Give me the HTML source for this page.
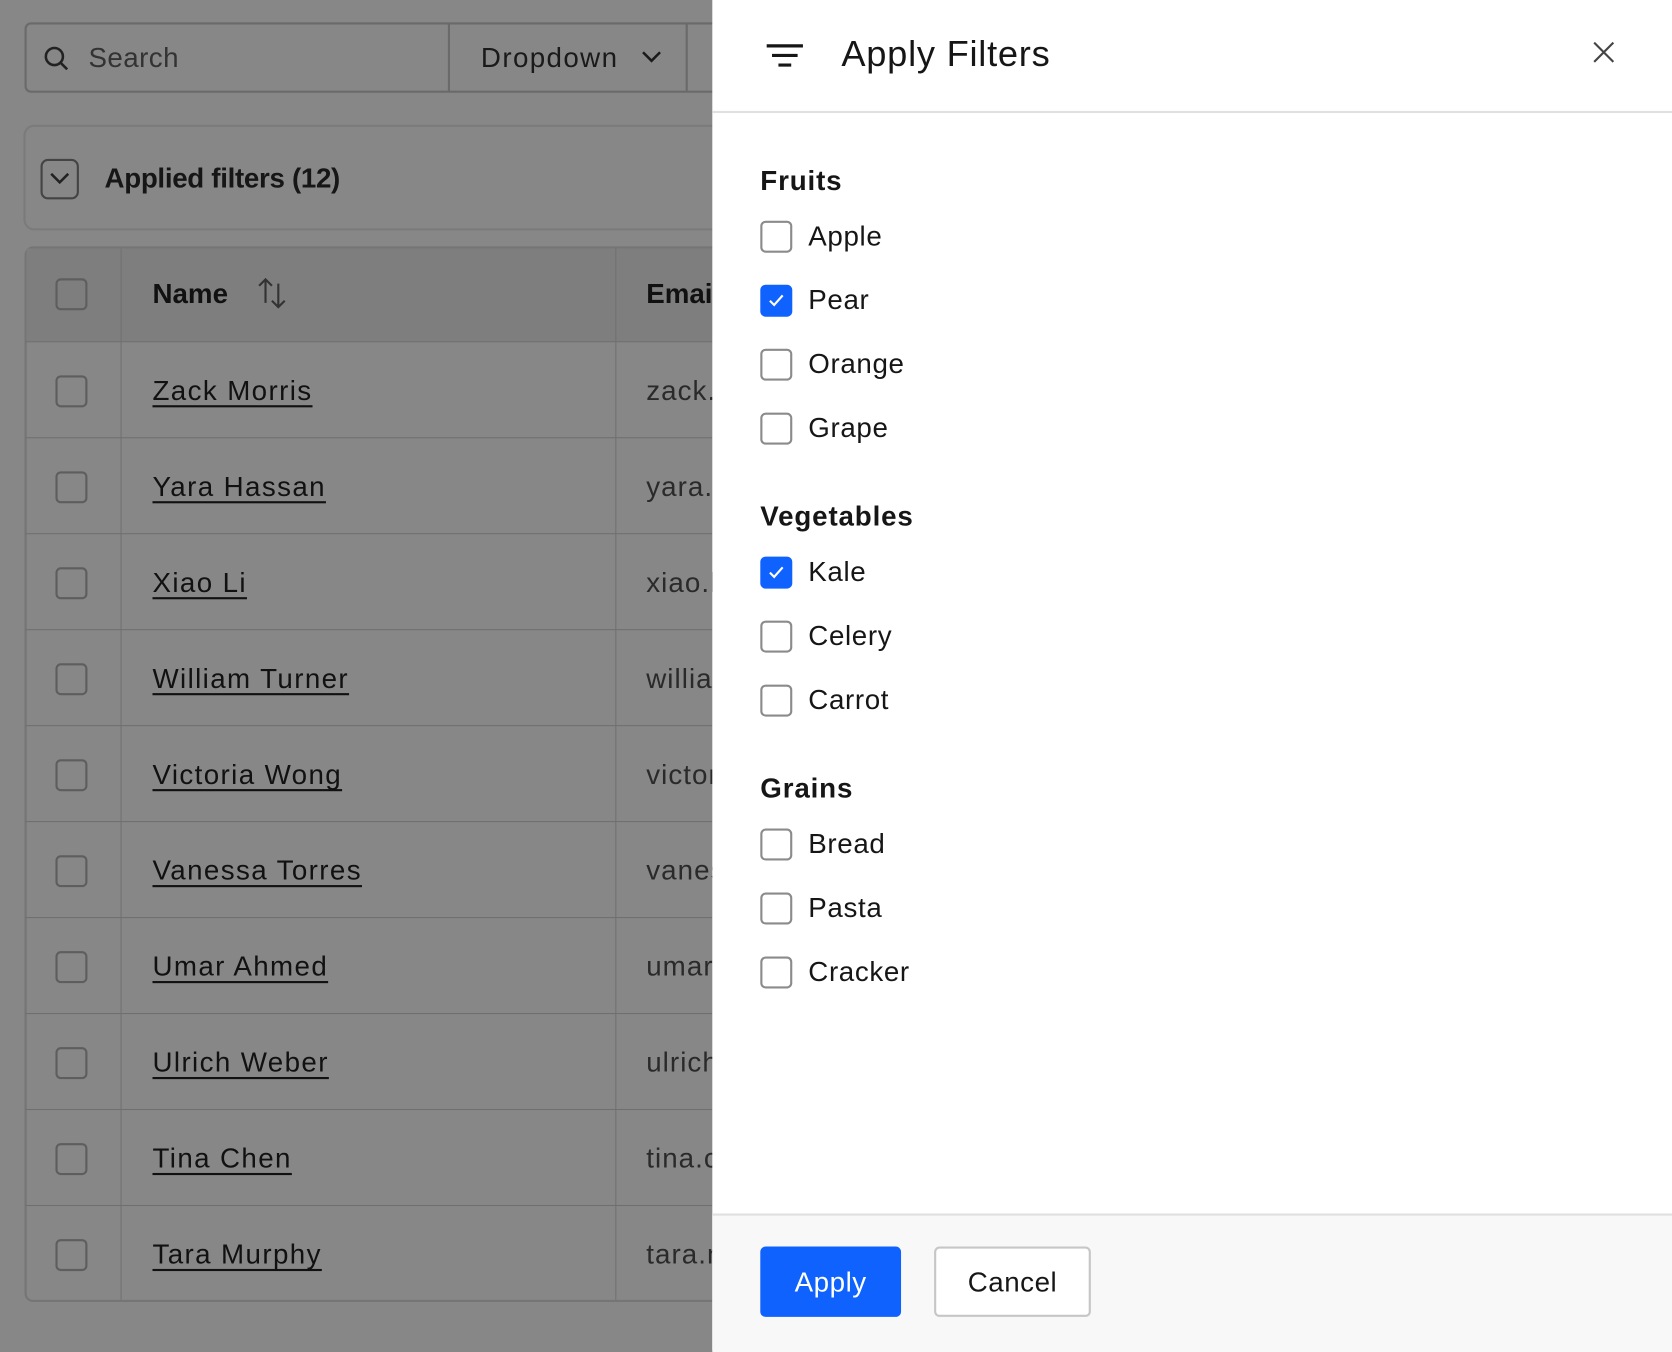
<!DOCTYPE html>
<html><head><meta charset="utf-8"><style>
html,body{margin:0;padding:0;width:1672px;height:1350px;overflow:hidden;background:#878787}
#w{position:absolute;left:0;top:0;width:1568px;height:1266px;transform:scale(1.06633);transform-origin:0 0;font-family:"Liberation Sans",sans-serif;color:#111}
.a{position:absolute}
.cb{position:absolute;width:30px;height:30px;border:2px solid #8b8b8b;border-radius:5px;box-sizing:border-box;background:#fff}
.lcb{position:absolute;width:30px;height:30px;border:2px solid #5e5e5e;border-radius:5px;box-sizing:border-box}
.on{background:#0f62fe;border-color:#0f62fe}
.lab{position:absolute;left:758px;font-size:26px;color:#161616;letter-spacing:0.6px}
.h{position:absolute;left:713px;font-size:26px;font-weight:bold;color:#161616;letter-spacing:0.8px}
.row{position:absolute;left:24px;width:644px;height:90px;border-top:1px solid #6f6f6f}
.nm{position:absolute;left:119px;top:30px;font-size:26px;text-decoration:underline;text-underline-offset:5px;color:#111;letter-spacing:1.3px}
.em{position:absolute;left:582px;top:30px;font-size:26px;color:#2a2a2a;white-space:nowrap;letter-spacing:1px}
</style></head><body><div id="w">
<div class="a" style="left:23px;top:21px;width:660px;height:66px;border:2px solid #6a6a6a;border-radius:6px;box-sizing:border-box"></div>
<svg class="a" style="left:40px;top:42px" width="26" height="26" viewBox="0 0 26 26"><circle cx="11" cy="11" r="8" fill="none" stroke="#222" stroke-width="2.4"/><path d="M17 17l6 6" stroke="#222" stroke-width="2.4"/></svg>
<div class="a" style="left:83px;top:39px;font-size:26px;color:#333;letter-spacing:0.4px">Search</div>
<div class="a" style="left:420px;top:22px;width:2px;height:64px;background:#6a6a6a"></div>
<div class="a" style="left:451px;top:39px;font-size:26px;color:#1a1a1a;letter-spacing:1.3px">Dropdown</div>
<svg class="a" style="left:600px;top:45px" width="22" height="16"><path d="M3 4l8 8 8-8" fill="none" stroke="#1a1a1a" stroke-width="2.4"/></svg>
<div class="a" style="left:643px;top:22px;width:2px;height:64px;background:#6a6a6a"></div>
<div class="a" style="left:22px;top:117px;width:680px;height:99px;border:2px solid #7b7b7b;border-radius:10px;box-sizing:border-box"></div>
<div class="a" style="left:38px;top:149px;width:36px;height:38px;border:2px solid #444;border-radius:7px;box-sizing:border-box"></div>
<svg class="a" style="left:44px;top:158px" width="24" height="18"><path d="M4 5l8 8 8-8" fill="none" stroke="#222" stroke-width="2.4"/></svg>
<div class="a" style="left:98px;top:152px;font-size:26px;font-weight:bold;color:#161616;letter-spacing:-0.3px">Applied filters (12)</div>
<div class="a" style="left:23px;top:231px;width:680px;height:990px;border:2px solid #757575;border-radius:8px;box-sizing:border-box"></div>
<div class="a" style="left:25px;top:233px;width:660px;height:87px;background:#7e7e7e"></div>
<div class="a" style="left:113px;top:233px;width:1px;height:986px;background:#717171"></div>
<div class="a" style="left:577px;top:233px;width:1px;height:986px;background:#717171"></div>
<div class="lcb" style="left:52px;top:261px"></div>
<div class="a" style="left:143px;top:260px;font-size:26px;font-weight:bold">Name</div>
<svg class="a" style="left:240px;top:258px" width="30" height="34"><path d="M9 26V4M3 10l6-6 6 6M21 8v22M15 24l6 6 6-6" fill="none" stroke="#333" stroke-width="2"/></svg>
<div class="a" style="left:606px;top:260px;font-size:26px;font-weight:bold">Email</div>
<div class="row" style="top:320px"><div class="lcb" style="left:28px;top:31px"></div><div class="nm">Zack Morris</div><div class="em">zack.morris</div></div>
<div class="row" style="top:410px"><div class="lcb" style="left:28px;top:31px"></div><div class="nm">Yara Hassan</div><div class="em">yara.hassan</div></div>
<div class="row" style="top:500px"><div class="lcb" style="left:28px;top:31px"></div><div class="nm">Xiao Li</div><div class="em">xiao.li</div></div>
<div class="row" style="top:590px"><div class="lcb" style="left:28px;top:31px"></div><div class="nm">William Turner</div><div class="em">william</div></div>
<div class="row" style="top:680px"><div class="lcb" style="left:28px;top:31px"></div><div class="nm">Victoria Wong</div><div class="em">victoria</div></div>
<div class="row" style="top:770px"><div class="lcb" style="left:28px;top:31px"></div><div class="nm">Vanessa Torres</div><div class="em">vanessa</div></div>
<div class="row" style="top:860px"><div class="lcb" style="left:28px;top:31px"></div><div class="nm">Umar Ahmed</div><div class="em">umar.a</div></div>
<div class="row" style="top:950px"><div class="lcb" style="left:28px;top:31px"></div><div class="nm">Ulrich Weber</div><div class="em">ulrich</div></div>
<div class="row" style="top:1040px"><div class="lcb" style="left:28px;top:31px"></div><div class="nm">Tina Chen</div><div class="em">tina.chen</div></div>
<div class="row" style="top:1130px"><div class="lcb" style="left:28px;top:31px"></div><div class="nm">Tara Murphy</div><div class="em">tara.m</div></div>
<div class="a" style="left:668px;top:0;width:900px;height:1266px;background:#fff"></div>
<div class="a" style="left:668px;top:104px;width:900px;height:2px;background:#e0e0e0"></div>
<svg class="a" style="left:718px;top:40px" width="36" height="26"><path d="M1 3h34M6 12h24M12 21h12" stroke="#161616" stroke-width="3"/></svg>
<div class="a" style="left:789px;top:32px;font-size:34px;color:#161616;letter-spacing:0.7px">Apply Filters</div>
<svg class="a" style="left:1492px;top:37px" width="24" height="24"><path d="M3 3l18 18M21 3L3 21" stroke="#444" stroke-width="2"/></svg>
<div class="h" style="top:154px">Fruits</div>
<div class="cb" style="left:713px;top:207px"></div><div class="lab" style="top:206px">Apple</div>
<div class="cb on" style="left:713px;top:267px"><svg width="26" height="26" style="position:absolute;left:0;top:0"><path d="M7 13l4 4 8-9" fill="none" stroke="#fff" stroke-width="2"/></svg></div><div class="lab" style="top:266px">Pear</div>
<div class="cb" style="left:713px;top:327px"></div><div class="lab" style="top:326px">Orange</div>
<div class="cb" style="left:713px;top:387px"></div><div class="lab" style="top:386px">Grape</div>
<div class="h" style="top:469px">Vegetables</div>
<div class="cb on" style="left:713px;top:522px"><svg width="26" height="26" style="position:absolute;left:0;top:0"><path d="M7 13l4 4 8-9" fill="none" stroke="#fff" stroke-width="2"/></svg></div><div class="lab" style="top:521px">Kale</div>
<div class="cb" style="left:713px;top:582px"></div><div class="lab" style="top:581px">Celery</div>
<div class="cb" style="left:713px;top:642px"></div><div class="lab" style="top:641px">Carrot</div>
<div class="h" style="top:724px">Grains</div>
<div class="cb" style="left:713px;top:777px"></div><div class="lab" style="top:776px">Bread</div>
<div class="cb" style="left:713px;top:837px"></div><div class="lab" style="top:836px">Pasta</div>
<div class="cb" style="left:713px;top:897px"></div><div class="lab" style="top:896px">Cracker</div>
<div class="a" style="left:668px;top:1138px;width:900px;height:128px;background:#f8f8f8;border-top:2px solid #e0e0e0"></div>
<div class="a" style="left:713px;top:1169px;width:132px;height:66px;background:#0f62fe;border-radius:5px;color:#fff;font-size:26px;line-height:66px;text-align:center;letter-spacing:0.5px">Apply</div>
<div class="a" style="left:876px;top:1169px;width:147px;height:66px;background:#fff;border:2px solid #c6c6c6;box-sizing:border-box;border-radius:5px;color:#161616;font-size:26px;line-height:62px;text-align:center;letter-spacing:0.5px">Cancel</div>
</div></body></html>
